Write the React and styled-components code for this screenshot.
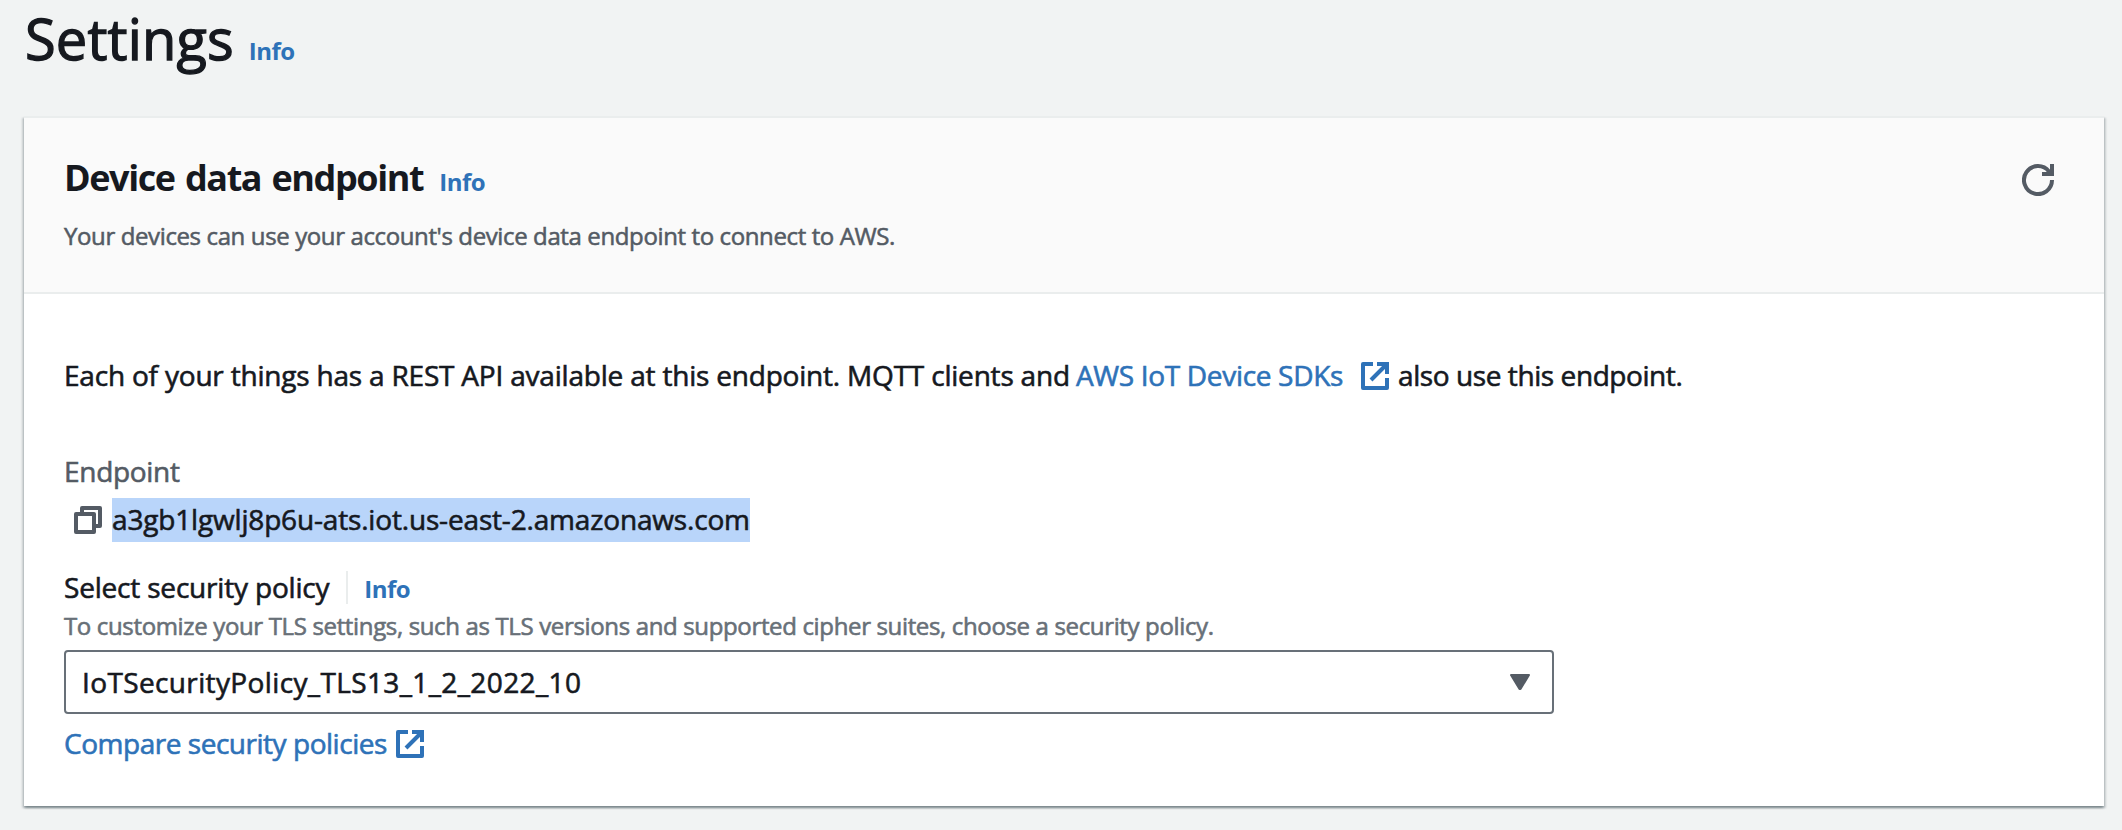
import React from "react";
import styled, { createGlobalStyle } from "styled-components";

const color = {
  page: "#f1f3f3",
  ink: "#16191f",
  secondary: "#545b64",
  hint: "#687078",
  link: "#2e72b8",
  line: "#eaeded",
  header: "#fafafa",
  selection: "#b9d5fa",
};

const GlobalStyle = createGlobalStyle`
  * { box-sizing: border-box; }
  body {
    margin: 0;
    background: ${color.page};
    color: ${color.ink};
    font-family: "Open Sans", "Noto Sans", sans-serif;
    font-size: 28px;
    line-height: 44px;
    white-space: nowrap;
  }
`;

const Page = styled.main`
  min-height: 830px;
  padding: 4px 18px 21px 24px;
`;

const PageHeader = styled.header`
  display: flex;
  align-items: baseline;
  height: 68px;
  margin-bottom: 44px;
`;

const PageTitle = styled.h1`
  margin: 0;
  padding-left: 1px;
  font-size: 56px;
  line-height: 68px;
  font-weight: 400;
  letter-spacing: 0.15px;
  -webkit-text-stroke: 1.3px currentColor;
`;

const InfoLink = styled.a`
  margin-left: ${(p) => p.$gap}px;
  color: ${color.link};
  font-size: 24px;
  font-weight: 700;
  letter-spacing: -0.5px;
`;

const Card = styled.section`
  width: 2080px;
  height: 690px;
  background: #fff;
  border-top: 2px solid ${color.line};
  box-shadow: 0 2px 2px rgba(0, 28, 36, 0.3), 2px 2px 2px rgba(0, 28, 36, 0.15),
    -2px 2px 2px rgba(0, 28, 36, 0.15);
`;

const CardHeader = styled.header`
  display: flex;
  justify-content: space-between;
  height: 176px;
  padding: 38px 50px 0 40px;
  background: ${color.header};
  border-bottom: 2px solid ${color.line};
`;

const TitleRow = styled.div`
  display: flex;
  align-items: baseline;
  height: 44px;
`;

const CardTitle = styled.h2`
  margin: 0;
  font-size: 36px;
  line-height: 44px;
  font-weight: 700;
  letter-spacing: -1.42px;
  word-spacing: 2.4px;
`;

const Description = styled.p`
  margin: 18px 0 0;
  color: ${color.secondary};
  font-size: 24px;
  line-height: 36px;
  letter-spacing: -0.38px;
  -webkit-text-stroke: 0.55px currentColor;
`;

const RefreshButton = styled.button`
  width: 32px;
  height: 32px;
  margin-top: 8px;
  padding: 0;
  border: 0;
  background: none;
  color: ${color.secondary};
`;

const Icon = styled.svg`
  display: block;
  flex: none;
  fill: none;
  stroke: currentColor;
  stroke-width: 4;
`;

const CardBody = styled.div`
  padding: 59px 40px 0;
`;

const Run = styled.span`
  letter-spacing: ${(p) => p.$tracking}px;
  -webkit-text-stroke: 0.6px currentColor;
`;

const Paragraph = styled.div`
  display: flex;
  height: 44px;
  margin-bottom: 52px;
`;

const TextLink = styled.a`
  display: inline-flex;
  align-items: center;
  gap: ${(p) => p.$gap}px;
  color: ${color.link};

  svg {
    margin-top: 2px;
  }
`;

const SdkLink = styled(TextLink)`
  margin: 0 9px 0 6px;
`;

const FieldLabel = styled.div`
  color: ${color.secondary};
`;

const EndpointValue = styled.div`
  display: flex;
  align-items: center;
  gap: 10px;
  margin: 5px 0 23px;
  padding-left: 10px;
  color: ${color.secondary};
`;

const Selected = styled(Run)`
  width: 638px;
  height: 44px;
  line-height: 42px;
  background: ${color.selection};
  color: ${color.ink};
`;

const PolicyLabel = styled.div`
  display: flex;
  align-items: baseline;
  height: 44px;
`;

const Divider = styled.i`
  align-self: flex-start;
  width: 2px;
  height: 33px;
  margin: 6px 0 0 17px;
  background: ${color.line};
`;

const Hint = styled.div`
  margin: 1px 0 8px;
  color: ${color.hint};
  font-size: 24px;
  line-height: 32px;
`;

const Select = styled.div`
  display: flex;
  align-items: center;
  justify-content: space-between;
  width: 1490px;
  height: 64px;
  margin-bottom: 7px;
  padding: 0 22px 0 16px;
  border: 2px solid ${color.hint};
  border-radius: 4px;
`;

const Caret = styled.svg`
  display: block;
  fill: ${color.secondary};
  stroke: ${color.secondary};
  stroke-width: 2;
  stroke-linejoin: round;
`;

const RefreshIcon = () => (
  <Icon width="32" height="32" viewBox="0 0 32 32">
    <path d="M30 16A14 14 0 1 1 27 7.4L29 10" />
    <path d="M30 0V10H20" />
  </Icon>
);

const ExternalIcon = () => (
  <Icon width="28" height="28" viewBox="0 0 28 28" strokeLinejoin="round">
    <path d="M12 2H2V26H26V16" />
    <path d="M16 2H26V12" strokeLinejoin="miter" />
    <path d="M25 3L10 18" />
  </Icon>
);

const CopyIcon = () => (
  <Icon width="28" height="28" viewBox="0 0 28 28" strokeLinejoin="round">
    <path d="M2 8H20V26H2Z" />
    <path d="M8 8V2H26V20H20" />
  </Icon>
);

export default function App() {
  return (
    <Page>
      <GlobalStyle />
      <PageHeader>
        <PageTitle>Settings</PageTitle>
        <InfoLink $gap={15}>Info</InfoLink>
      </PageHeader>
      <Card>
        <CardHeader>
          <div>
            <TitleRow>
              <CardTitle>Device data endpoint</CardTitle>
              <InfoLink $gap={16}>Info</InfoLink>
            </TitleRow>
            <Description>
              Your devices can use your account's device data endpoint to connect to AWS.
            </Description>
          </div>
          <RefreshButton aria-label="Refresh">
            <RefreshIcon />
          </RefreshButton>
        </CardHeader>
        <CardBody>
          <Paragraph>
            <Run $tracking={-0.2}>
              Each of your things has a REST API available at this endpoint. MQTT clients and
            </Run>
            <SdkLink $gap={18}>
              <Run $tracking={-0.32}>AWS IoT Device SDKs</Run>
              <ExternalIcon />
            </SdkLink>
            <Run $tracking={-0.42}>also use this endpoint.</Run>
          </Paragraph>
          <FieldLabel>
            <Run $tracking={-0.3}>Endpoint</Run>
          </FieldLabel>
          <EndpointValue>
            <CopyIcon />
            <Selected $tracking={-0.17}>
              a3gb1lgwlj8p6u-ats.iot.us-east-2.amazonaws.com
            </Selected>
          </EndpointValue>
          <PolicyLabel>
            <Run $tracking={-0.19}>Select security policy</Run>
            <Divider />
            <InfoLink $gap={16}>Info</InfoLink>
          </PolicyLabel>
          <Hint>
            <Run $tracking={-0.35}>
              To customize your TLS settings, such as TLS versions and supported cipher suites,
              choose a security policy.
            </Run>
          </Hint>
          <Select>
            <Run $tracking={0.37}>IoTSecurityPolicy_TLS13_1_2_2022_10</Run>
            <Caret width="20" height="16" viewBox="0 0 20 16">
              <path d="M1 1H19L10.5 15H9.5Z" />
            </Caret>
          </Select>
          <TextLink $gap={9}>
            <Run $tracking={-0.47}>Compare security policies</Run>
            <ExternalIcon />
          </TextLink>
        </CardBody>
      </Card>
    </Page>
  );
}
